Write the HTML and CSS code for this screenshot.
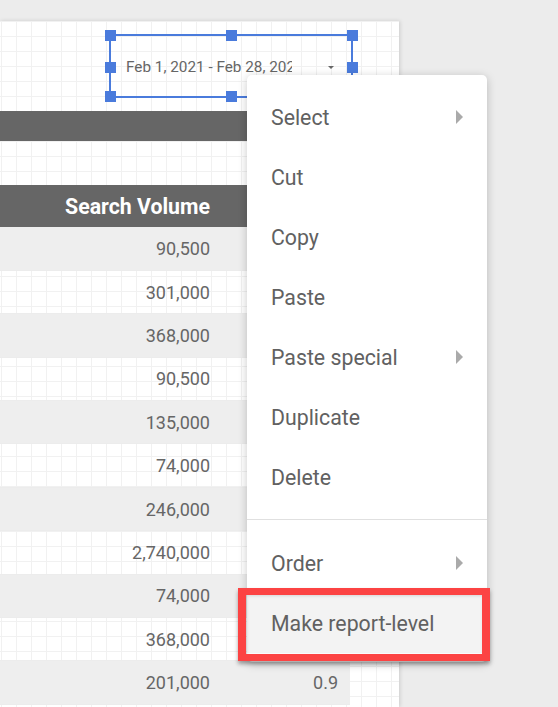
FILE: index.html
```html
<!DOCTYPE html>
<html>
<head>
<meta charset="utf-8">
<link rel="stylesheet" href="styles.css">
</head>
<body>
<div class="stage">
  <div class="page">
    <div class="date-row">
      <div class="sel">
        <div class="date-ctrl">
          <span class="date-text">Feb 1, 2021 - Feb 28, 2021</span>
          <span class="caret"></span>
        </div>
        <span class="h h-tl"></span><span class="h h-tm"></span><span class="h h-tr"></span>
        <span class="h h-ml"></span><span class="h h-mr"></span>
        <span class="h h-bl"></span><span class="h h-bm"></span><span class="h h-br"></span>
      </div>
    </div>
    <div class="bar"></div>
    <table class="tbl">
      <thead>
        <tr><th class="c1">Search Volume</th><th class="c2"></th></tr>
      </thead>
      <tbody>
        <tr class="odd"><td class="c1">90,500</td><td class="c2"></td></tr>
        <tr><td class="c1">301,000</td><td class="c2"></td></tr>
        <tr class="odd"><td class="c1">368,000</td><td class="c2"></td></tr>
        <tr><td class="c1">90,500</td><td class="c2"></td></tr>
        <tr class="odd"><td class="c1">135,000</td><td class="c2"></td></tr>
        <tr><td class="c1">74,000</td><td class="c2"></td></tr>
        <tr class="odd"><td class="c1">246,000</td><td class="c2"></td></tr>
        <tr><td class="c1">2,740,000</td><td class="c2"></td></tr>
        <tr class="odd"><td class="c1">74,000</td><td class="c2"></td></tr>
        <tr><td class="c1">368,000</td><td class="c2"></td></tr>
        <tr class="odd"><td class="c1">201,000</td><td class="c2">0.9</td></tr>
      </tbody>
    </table>
  </div>

  <div class="menu">
    <div class="item">Select<span class="arrow"></span></div>
    <div class="item">Cut</div>
    <div class="item">Copy</div>
    <div class="item">Paste</div>
    <div class="item">Paste special<span class="arrow"></span></div>
    <div class="item">Duplicate</div>
    <div class="item">Delete</div>
    <div class="sep"></div>
    <div class="item">Order<span class="arrow"></span></div>
    <div class="item active">Make report-level<span class="mark"></span></div>
  </div>
</div>
</body>
</html>
```
FILE: styles.css
```css
html, body {
  margin: 0;
  padding: 0;
}
body {
  background: #ececec;
  font-family: Roboto, "Liberation Sans", Arial, sans-serif;
  width: 558px;
  height: 707px;
  overflow: hidden;
}
.stage {
  position: relative;
  width: 558px;
  height: 707px;
  padding-top: 21px;
  box-sizing: border-box;
}
.page {
  width: 399px;
  height: 686px;
  background-color: #fff;
  background-image:
    linear-gradient(to right, #f1f1f1 1px, transparent 1px),
    linear-gradient(to bottom, #f1f1f1 1px, transparent 1px);
  background-size: 15px 15px;
  background-position: 1px 0;
  box-shadow: 1px 0 4px rgba(0,0,0,0.14);
  overflow: hidden;
}
.date-row {
  padding: 13px 0 0 109px;
  height: 64px;
}
.sel {
  position: relative;
  box-sizing: border-box;
  width: 244px;
  height: 64px;
  border: 2px solid #4a7bdc;
}
.date-ctrl {
  display: flex;
  align-items: center;
  height: 100%;
  padding-left: 15px;
  padding-top: 2px;
  box-sizing: border-box;
}
.date-text {
  width: 166px;
  overflow: hidden;
  white-space: nowrap;
  font-size: 15.3px;
  color: #666;
}
.caret {
  margin-left: 36px;
  width: 0;
  height: 0;
  border-left: 3.5px solid transparent;
  border-right: 3.5px solid transparent;
  border-top: 3.5px solid #666;
}
.h {
  position: absolute;
  width: 11px;
  height: 11px;
  background: #4a7bdc;
  margin: -5.5px 0 0 -5.5px;
}
.h-tl { left: -1px; top: -1px; }
.h-tm { left: 50%; top: -1px; }
.h-tr { left: calc(100% + 1px); top: -1px; }
.h-ml { left: -1px; top: 53%; }
.h-mr { left: calc(100% + 1px); top: 53%; }
.h-bl { left: -1px; top: 100%; }
.h-bm { left: 50%; top: 100%; }
.h-br { left: calc(100% + 1px); top: 100%; }

.bar {
  margin-top: 13px;
  width: 350px;
  height: 30px;
  background: #666;
}
.tbl {
  margin-top: 44px;
  width: 350px;
  border-collapse: collapse;
  table-layout: fixed;
}
.tbl th {
  background: #666;
  color: #fff;
  font-weight: 700;
  font-size: 21.3px;
  height: 42px;
  padding: 0 12px;
  text-align: right;
}
.tbl td {
  height: 43.4px;
  box-sizing: border-box;
  padding: 0 12px;
  text-align: right;
  font-size: 18px;
  color: #666;
  border-bottom: 1px solid #ececec;
}
.tbl .c1 { width: 222px; box-sizing: border-box; }
.tbl tr.odd td { background: #eeeeee; }

.menu {
  position: absolute;
  left: 247px;
  top: 75px;
  width: 240px;
  background: #fff;
  border-radius: 5px;
  box-shadow: 0 2px 10px rgba(0,0,0,0.22);
  padding: 12px 0 9px;
}
.item {
  position: relative;
  height: 60px;
  display: flex;
  align-items: center;
  justify-content: space-between;
  padding: 0 24px;
  font-size: 21.3px;
  color: #616161;
}
.arrow {
  width: 0;
  height: 0;
  border-top: 7.5px solid transparent;
  border-bottom: 7.5px solid transparent;
  border-left: 7px solid #aaa;
}
.sep {
  height: 1px;
  background: #e0e0e0;
  margin: 12px 0 13px;
}
.item.active {
  background: #f3f3f3;
}
.mark {
  position: absolute;
  left: -9px;
  right: -3px;
  top: -5px;
  bottom: -8px;
  border-style: solid;
  border-color: #fc4343;
  border-width: 7px 8px;
  box-shadow: 0 3px 4px rgba(0,0,0,0.35), inset 1px 1px 3px rgba(0,0,0,0.12);
}
```
